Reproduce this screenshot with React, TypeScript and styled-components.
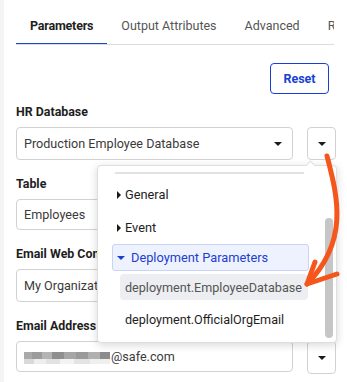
import React from "react";
import styled, { createGlobalStyle } from "styled-components";

const GlobalStyle = createGlobalStyle`
  html, body { margin: 0; padding: 0; background: #ffffff; }
  body { font-family: Roboto, "Liberation Sans", Arial, sans-serif; }
  * { box-sizing: border-box; }
`;

const Page = styled.div`
  position: relative;
  width: 347px;
  height: 382px;
  overflow: hidden;
  border-left: 4px solid #f4f4f4;
  padding: 0 11px 0 12px;
  background: #fff;
`;

const TabBar = styled.div`
  margin-top: 7px;
  height: 38px;
  display: flex;
  border-bottom: 1px solid #dcdcdc;
  overflow: hidden;
  width: 318px;
`;

const Tab = styled.div<{ $active?: boolean }>`
  position: relative;
  flex: none;
  padding: 11px 14px 10px;
  font-size: 12.5px;
  line-height: 16px;
  white-space: nowrap;
  color: ${(p) => (p.$active ? "#1f1f1f" : "#555555")};
  font-weight: ${(p) => (p.$active ? 700 : 400)};
  letter-spacing: ${(p) => (p.$active ? "-0.2px" : "0")};
  &::after {
    content: "";
    position: absolute;
    left: 0;
    right: 0;
    bottom: -1px;
    height: 2px;
    background: ${(p) => (p.$active ? "#1a47c8" : "transparent")};
  }
`;

const ActionRow = styled.div`
  display: flex;
  justify-content: flex-end;
  padding-right: 7px;
  margin-top: 18px;
`;

const ResetButton = styled.button`
  width: 59px;
  height: 31px;
  border: 1.5px solid #1a3fd4;
  border-radius: 4px;
  background: #fff;
  color: #1a3fd4;
  font-family: Roboto, "Liberation Sans", Arial, sans-serif;
  font-weight: 700;
  font-size: 12.5px;
  padding: 0;
`;

const Form = styled.div`
  margin-top: 10px;
  display: flex;
  flex-direction: column;
`;

const Field = styled.div`
  position: relative;
  margin-bottom: 16px;
`;

const Label = styled.div`
  font-size: 12.4px;
  line-height: 16px;
  font-weight: 700;
  color: #1e1e1e;
  margin-bottom: 7px;
  white-space: nowrap;
`;

const FieldRow = styled.div`
  display: flex;
  gap: 14px;
`;

const Box = styled.div<{ $h?: number }>`
  flex: 1;
  height: ${(p) => p.$h ?? 33}px;
  border: 1px solid #d2d2d2;
  border-radius: 4px;
  display: flex;
  align-items: center;
  padding: 0 10px 0 7px;
  font-size: 12.6px;
  color: #3a3a3a;
  white-space: nowrap;
  overflow: hidden;
`;

const BoxText = styled.span`
  flex: 1;
  overflow: hidden;
`;

const Caret = styled.span`
  width: 0;
  height: 0;
  border-left: 4px solid transparent;
  border-right: 4px solid transparent;
  border-top: 4px solid #1a1a1a;
  flex: none;
`;

const IconButton = styled.div<{ $h?: number }>`
  width: 29px;
  height: ${(p) => p.$h ?? 33}px;
  border: 1px solid #d2d2d2;
  border-radius: 4px;
  display: flex;
  align-items: center;
  justify-content: center;
  flex: none;
`;

const Redacted = styled.span`
  display: inline-flex;
  flex-direction: column;
  width: 86px;
  height: 12px;
  margin-right: 1px;
  vertical-align: middle;
  & > span:first-child {
    height: 7px;
    background: linear-gradient(
      90deg,
      #a9a9a9 0 8px,
      #9c9c9c 8px 18px,
      #b4b4b4 18px 28px,
      #8f8f8f 28px 40px,
      #a6a6a6 40px 52px,
      #9a9a9a 52px 64px,
      #b0b0b0 64px 76px,
      #8c8c8c 76px 86px
    );
  }
  & > span:last-child {
    height: 5px;
    background: linear-gradient(
      90deg,
      #d9d9d9 0 10px,
      #eeeeee 10px 22px,
      #e2e2e2 22px 36px,
      #f3f3f3 36px 50px,
      #e4e4e4 50px 66px,
      #efefef 66px 86px
    );
  }
`;

const Popup = styled.div`
  position: absolute;
  left: 81px;
  top: 61px;
  width: 240px;
  height: 178px;
  background: #fff;
  border: 1px solid #dedede;
  border-radius: 4px;
  box-shadow: 0 2px 8px rgba(0, 0, 0, 0.16);
  padding: 6px 0 0 14px;
  z-index: 2;
  &::before {
    content: "";
    position: absolute;
    top: -4px;
    right: 22px;
    width: 6px;
    height: 6px;
    background: #fff;
    border-left: 1px solid #dedede;
    border-top: 1px solid #dedede;
    transform: rotate(45deg);
  }
`;

const Divider = styled.div`
  width: 189px;
  margin-left: 3px;
  height: 2px;
  background: #e2e2e2;
  margin-bottom: 4px;
`;

const GroupRow = styled.div<{ $open?: boolean }>`
  width: 197px;
  height: ${(p) => (p.$open ? 27 : 33)}px;
  display: flex;
  align-items: center;
  gap: 4px;
  padding-left: 4px;
  font-size: 12.8px;
  color: ${(p) => (p.$open ? "#1c3fd0" : "#1e1e1e")};
  background: ${(p) => (p.$open ? "#eef2fe" : "transparent")};
  border: 1px solid ${(p) => (p.$open ? "#c8d3f6" : "transparent")};
  border-radius: 3px;
  white-space: nowrap;
`;

const RightTri = styled.span`
  width: 0;
  height: 0;
  border-top: 4px solid transparent;
  border-bottom: 4px solid transparent;
  border-left: 4px solid #1a1a1a;
  flex: none;
`;

const DownTri = styled.span`
  width: 0;
  height: 0;
  border-left: 4px solid transparent;
  border-right: 4px solid transparent;
  border-top: 4px solid #1c3fd0;
  flex: none;
  margin-right: 2px;
`;

const ChildItem = styled.div<{ $hl?: boolean }>`
  margin-left: 8px;
  width: 188px;
  height: ${(p) => (p.$hl ? 26 : 32)}px;
  margin-top: 3px;
  display: flex;
  align-items: center;
  padding-left: 5px;
  font-size: 12.6px;
  color: ${(p) => (p.$hl ? "#555" : "#1e1e1e")};
  background: ${(p) => (p.$hl ? "#eceef1" : "transparent")};
  border-radius: 4px;
  white-space: nowrap;
`;

const ScrollThumb = styled.div`
  position: absolute;
  right: 3px;
  top: 52px;
  bottom: 4px;
  width: 8px;
  border-radius: 4px;
  background: #c6c6c6;
`;

const ArrowLayer = styled.svg`
  position: absolute;
  left: 0;
  top: 0;
  width: 347px;
  height: 382px;
  pointer-events: none;
  z-index: 3;
`;

const DropCaret = () => <Caret />;

export default function App() {
  return (
    <>
      <GlobalStyle />
      <Page>
        <TabBar>
          <Tab $active>Parameters</Tab>
          <Tab>Output Attributes</Tab>
          <Tab>Advanced</Tab>
          <Tab>Results</Tab>
        </TabBar>
        <ActionRow>
          <ResetButton>Reset</ResetButton>
        </ActionRow>
        <Form>
          <Field>
            <Label>HR Database</Label>
            <FieldRow>
              <Box>
                <BoxText>Production Employee Database</BoxText>
                <DropCaret />
              </Box>
              <IconButton>
                <DropCaret />
              </IconButton>
            </FieldRow>
            <Popup>
              <Divider />
              <GroupRow>
                <RightTri />
                General
              </GroupRow>
              <GroupRow>
                <RightTri />
                Event
              </GroupRow>
              <GroupRow $open>
                <DownTri />
                Deployment Parameters
              </GroupRow>
              <ChildItem $hl>deployment.EmployeeDatabase</ChildItem>
              <ChildItem>deployment.OfficialOrgEmail</ChildItem>
              <ScrollThumb />
            </Popup>
          </Field>
          <Field>
            <Label>Table</Label>
            <FieldRow>
              <Box $h={31}>
                <BoxText>Employees</BoxText>
              </Box>
            </FieldRow>
          </Field>
          <Field>
            <Label>Email Web Connection</Label>
            <FieldRow>
              <Box $h={33}>
                <BoxText>My Organization Email</BoxText>
              </Box>
            </FieldRow>
          </Field>
          <Field>
            <Label>Email Address</Label>
            <FieldRow>
              <Box $h={31}>
                <BoxText>
                  <Redacted>
                    <span />
                    <span />
                  </Redacted>
                  @safe.com
                </BoxText>
              </Box>
              <IconButton $h={33}>
                <DropCaret />
              </IconButton>
            </FieldRow>
          </Field>
        </Form>
        <ArrowLayer viewBox="0 0 347 382">
          <path
            d="M323 156 C 333 195, 346 240, 303 284"
            fill="none"
            stroke="#f4561c"
            strokeWidth="5"
            strokeLinecap="round"
          />
          <path
            d="M311 262 L 303 284 L 333 274"
            fill="none"
            stroke="#f4561c"
            strokeWidth="5"
            strokeLinecap="round"
            strokeLinejoin="round"
          />
        </ArrowLayer>
      </Page>
    </>
  );
}
